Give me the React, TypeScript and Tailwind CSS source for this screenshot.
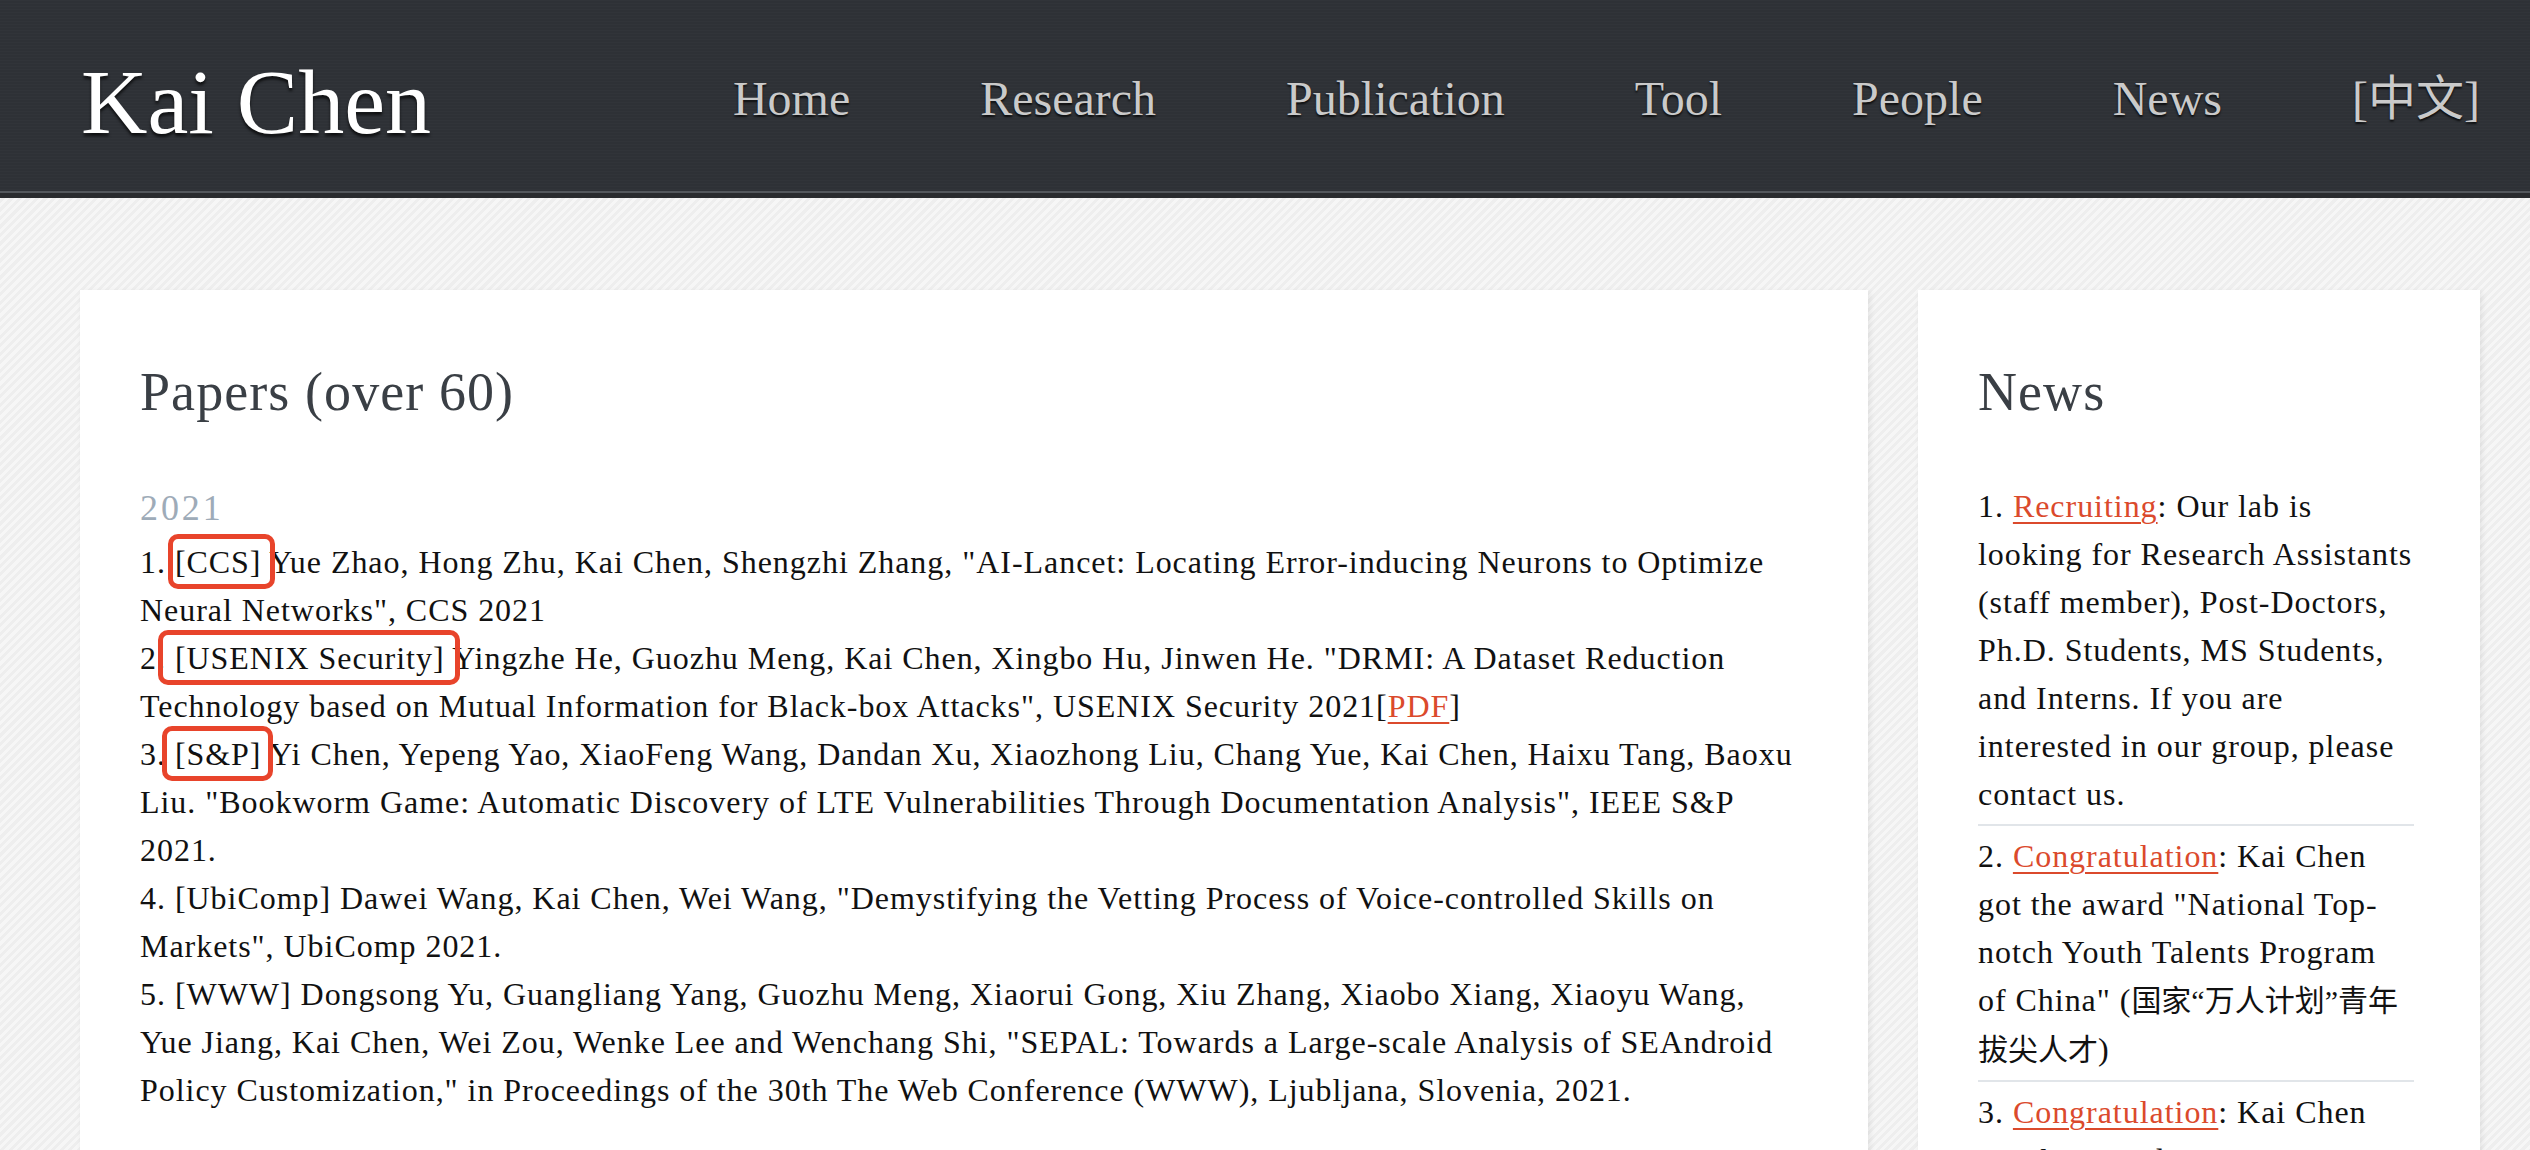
import type { ReactNode } from 'react'

const navItems = ['Home', 'Research', 'Publication', 'Tool', 'People', 'News', '[中文]']

function Marked({ children, box }: { children: ReactNode; box: string }) {
  return (
    <span className="relative">
      {children}
      <span
        className={`pointer-events-none absolute -top-[10px] -bottom-[9px] rounded-[10px] border-[5px] border-[#e8442b] ${box}`}
      />
    </span>
  )
}

function Link({ children }: { children: ReactNode }) {
  return (
    <a href="#" className="text-[#db4a2c] underline decoration-[2px] underline-offset-[5px]">
      {children}
    </a>
  )
}

function Header() {
  return (
    <header className="h-[198px] border-b-[5px] border-[#2a2c2f] bg-[#2e3136] bg-[repeating-linear-gradient(0deg,rgba(255,255,255,0.015)_0px,rgba(255,255,255,0.015)_1px,transparent_1px,transparent_3px)]">
      <div className="flex h-[193px] items-start border-b-[2px] border-[#54585d] pl-[81px] pr-[50px] pt-[56px]">
        <a
          href="#"
          className="text-[92px] leading-none text-white [text-shadow:0_3px_3px_rgba(0,0,0,0.7)]"
        >
          Kai Chen
        </a>
        <nav className="ml-auto mt-[19px] flex gap-[130px]">
          {navItems.map((item) => (
            <a
              key={item}
              href="#"
              className="text-[48px] leading-none text-[#cacaca] [text-shadow:0_2px_2px_rgba(0,0,0,0.75)]"
            >
              {item}
            </a>
          ))}
        </nav>
      </div>
    </header>
  )
}

function Papers() {
  return (
    <section className="w-[1788px] shrink-0 bg-white pb-[200px] pl-[60px] pr-[71px] pt-[75px] shadow-[2px_2px_6px_rgba(0,0,0,0.08)]">
      <h2 className="text-[54px] leading-none tracking-[0.02em] text-[#3a3f45]">Papers (over 60)</h2>
      <h3 className="mt-[71px] text-[36px] leading-none tracking-[0.08em] text-[#9eabb8]">2021</h3>
      <div className="mt-[12px] text-[32px] leading-[48px] tracking-[0.03em] text-[#111]">
        1. <Marked box="-left-[7px] -right-[13px]">[CCS]</Marked> Yue Zhao, Hong Zhu, Kai Chen, Shengzhi Zhang,
        "AI-Lancet: Locating Error-inducing Neurons to Optimize Neural Networks", CCS 2021
        <br />
        2. <Marked box="-left-[17px] -right-[15px]">[USENIX Security]</Marked> Yingzhe He, Guozhu Meng, Kai Chen,
        Xingbo Hu, Jinwen He. "DRMI: A Dataset Reduction Technology based on Mutual Information for Black-box
        Attacks", USENIX Security 2021[<Link>PDF</Link>]
        <br />
        3. <Marked box="-left-[13px] -right-[11px]">[S&amp;P]</Marked> Yi Chen, Yepeng Yao, XiaoFeng Wang, Dandan
        Xu, Xiaozhong Liu, Chang Yue, Kai Chen, Haixu Tang, Baoxu Liu. "Bookworm Game: Automatic Discovery of LTE
        Vulnerabilities Through Documentation Analysis", IEEE S&amp;P 2021.
        <br />
        4. [UbiComp] Dawei Wang, Kai Chen, Wei Wang, "Demystifying the Vetting Process of Voice-controlled Skills
        on Markets", UbiComp 2021.
        <br />
        5. [WWW] Dongsong Yu, Guangliang Yang, Guozhu Meng, Xiaorui Gong, Xiu Zhang, Xiaobo Xiang, Xiaoyu Wang,
        Yue Jiang, Kai Chen, Wei Zou, Wenke Lee and Wenchang Shi, "SEPAL: Towards a Large-scale Analysis of
        SEAndroid Policy Customization," in Proceedings of the 30th The Web Conference (WWW), Ljubljana, Slovenia,
        2021.
      </div>
    </section>
  )
}

function News() {
  return (
    <aside className="w-[562px] shrink-0 bg-white pb-[200px] pl-[60px] pr-[66px] pt-[75px] shadow-[2px_2px_6px_rgba(0,0,0,0.08)]">
      <h2 className="text-[54px] leading-none tracking-[0.02em] text-[#3a3f45]">News</h2>
      <ul className="mt-[57px] text-[32px] leading-[48px] tracking-[0.03em] text-[#111]">
        <li className="py-[6px]">
          1. <Link>Recruiting</Link>: Our lab is looking for Research Assistants (staff member), Post-Doctors, Ph.D.
          Students, MS Students, and Interns. If you are interested in our group, please contact us.
        </li>
        <li className="border-t-[2px] border-[#e1e5e9] py-[6px]">
          2. <Link>Congratulation</Link>: Kai Chen got the award "National Top-notch Youth Talents Program
          of&nbsp;China" (<span className="text-[30px] tracking-normal">国家“万人计划”青年拔尖人才</span>)
        </li>
        <li className="border-t-[2px] border-[#e1e5e9] py-[6px]">
          3. <Link>Congratulation</Link>: Kai Chen got the award "Beijing Nova Program" (
          <span className="text-[30px] tracking-normal">北京市科技新星</span>)
        </li>
      </ul>
    </aside>
  )
}

export default function App() {
  return (
    <div className="min-h-screen bg-[#f3f3f3] bg-[repeating-linear-gradient(135deg,#f6f6f6_0px,#f6f6f6_3px,#eeeeee_3px,#eeeeee_6px)] font-['Liberation_Serif','Noto_Sans_CJK_SC',serif]">
      <Header />
      <main className="flex items-start gap-[50px] pl-[80px] pr-[50px] pt-[92px]">
        <Papers />
        <News />
      </main>
    </div>
  )
}
